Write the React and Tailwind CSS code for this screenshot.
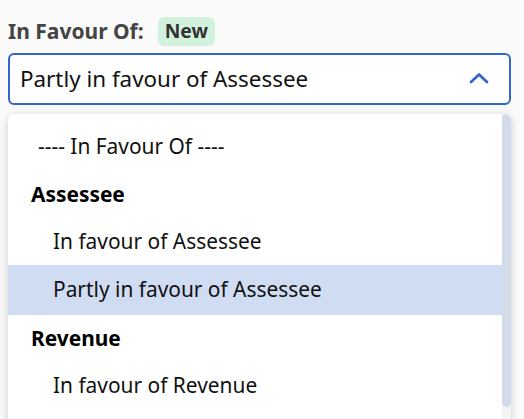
const options = [
  { label: '---- In Favour Of ----', kind: 'placeholder' },
  { label: 'Assessee', kind: 'group' },
  { label: 'In favour of Assessee', kind: 'option' },
  { label: 'Partly in favour of Assessee', kind: 'option', selected: true },
  { label: 'Revenue', kind: 'group' },
  { label: 'In favour of Revenue', kind: 'option' },
];

export default function App() {
  return (
    <div
      className="w-[524px] h-[419px] overflow-hidden bg-[#fafafa] px-2 pt-[17px]"
      style={{ fontFamily: '"Noto Sans", "Open Sans", sans-serif' }}
    >
      {/* Label */}
      <div className="flex items-center gap-[14px] h-[29px]">
        <span className="text-[21px] font-bold text-[#444]">In Favour Of:</span>
        <span className="rounded-md bg-[#d3f2de] px-[7px] h-[29px] flex items-center text-[19.3px] font-bold text-[#333]">
          New
        </span>
      </div>

      {/* Select */}
      <div className="mt-[7px] flex h-[52px] w-[503px] items-center justify-between rounded-[6px] border-2 border-[#3366cc] bg-white pl-[10px] pr-[20px]">
        <span className="text-[22.4px] text-[#111]">Partly in favour of Assessee</span>
        <svg width="20" height="12" viewBox="0 0 20 12" fill="none" className="mt-[-2px]">
          <polyline
            points="2,10 10,2.5 18,10"
            stroke="#3366cc"
            strokeWidth="2.8"
            strokeLinecap="round"
            strokeLinejoin="round"
          />
        </svg>
      </div>

      {/* Dropdown list */}
      <div className="mt-[9px] flex h-[320px] w-[503px] overflow-hidden rounded-t-[6px] bg-white shadow-[0_2px_8px_rgba(0,0,0,0.18)]">
        <ul className="flex-1 pt-2">
          {options.map((o, i) => (
            <li
              key={o.label}
              className={
                'flex items-center text-[20.9px] text-[#111] ' +
                (i === 0 ? 'h-[49px] ' : o.selected ? 'h-[50px] bg-[#d0dcf2] ' : 'h-[47px] ') +
                (o.kind === 'group'
                  ? 'pl-[23px] font-bold text-black'
                  : o.kind === 'placeholder'
                  ? 'pl-[30px]'
                  : 'pl-[45px]')
              }
            >
              {o.label}
            </li>
          ))}
        </ul>
        <div className="w-[9px] bg-[#f4f4f4]">
          <div className="h-[293px] w-[9px] rounded-b-[5px] rounded-t-[4px] bg-[#d3dbe8]" />
        </div>
      </div>
    </div>
  );
}
